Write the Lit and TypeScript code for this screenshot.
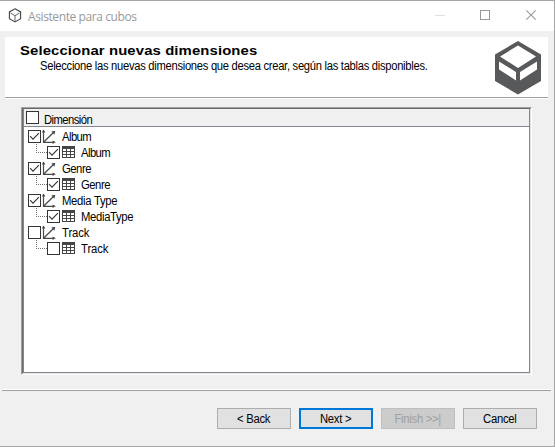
import { LitElement, html, css, svg } from "lit";
import { customElement, property } from "lit/decorators.js";
import { classMap } from "lit/directives/class-map.js";
import { styleMap } from "lit/directives/style-map.js";

interface TreeRow {
  label: string;
  checked: boolean;
  child: boolean;
  tracking: number;
}

const ROWS: TreeRow[] = [
  { label: "Album", checked: true, child: false, tracking: -0.6 },
  { label: "Album", checked: true, child: true, tracking: -0.6 },
  { label: "Genre", checked: true, child: false, tracking: -0.5 },
  { label: "Genre", checked: true, child: true, tracking: -0.5 },
  { label: "Media Type", checked: true, child: false, tracking: -0.3 },
  { label: "MediaType", checked: true, child: true, tracking: -0.35 },
  { label: "Track", checked: false, child: false, tracking: -0.1 },
  { label: "Track", checked: false, child: true, tracking: -0.1 },
];

@customElement("check-box")
class CheckBox extends LitElement {
  @property({ type: Boolean }) checked = false;

  static styles = css`
    :host { display: block; width: 13px; height: 13px; flex: none; }
    svg { display: block; }
  `;

  render() {
    return html`<svg width="13" height="13" viewBox="0 0 13 13">
      <rect x=".5" y=".5" width="12" height="12" fill="#fff" stroke="#333" />
      ${this.checked
        ? svg`<path d="M2.1 6.2 5 9.1 10.9 3.2" fill="none" stroke="#333" stroke-width="1.15" />`
        : null}
    </svg>`;
  }
}

@customElement("dimension-tree")
class DimensionTree extends LitElement {
  static styles = css`
    :host {
      display: flex;
      flex-direction: column;
      box-sizing: border-box;
      background: #fff;
      border: 1px solid;
      border-color: #a0a0a0 #fff #fff #a0a0a0;
    }
    .inner {
      flex: 1;
      border: 1px solid;
      border-color: #696969 #e3e3e3 #e3e3e3 #696969;
    }
    .frame {
      height: 100%;
      box-sizing: border-box;
      border: 1px solid #828790;
      border-top: 0;
    }
    .head {
      display: flex;
      height: 18px;
      align-items: flex-start;
      box-sizing: border-box;
      padding: 2px 0 0 2px;
      background: #f0f0f0;
      border-bottom: 1px solid #828790;
    }
    .head .text { line-height: 18px; letter-spacing: -0.6px; }
    .rows { padding-top: 1px; }
    .row { display: flex; height: 16px; padding-left: 4px; }
    .row check-box { margin-top: 2px; }
    .icon { display: block; flex: none; margin-left: 1px; }
    .text {
      display: block;
      white-space: pre;
      line-height: 19px;
      margin-left: 5px;
      transform: scaleX(0.94);
      transform-origin: left;
    }
    .elbow {
      width: 16px;
      height: 11px;
      margin-left: 3px;
      flex: none;
    }
  `;

  private axes() {
    return html`<svg class="icon" width="15" height="16" viewBox="0 0 15 16">
      <g fill="none" stroke="#4a4a4c" stroke-width="1.2">
        <path d="M1.5 3V14.3H12M1.5 14.3 12 4" />
      </g>
      <path d="M-.3 4.5 1.5 1.5 3.4 4.5ZM9.3 3.5 13.2 2.8 12.5 6.7ZM10.6 12.5 13.8 14.3 10.6 16Z" fill="#4a4a4c" />
    </svg>`;
  }

  private table() {
    return html`<svg class="icon" width="15" height="16" viewBox="0 0 15 16">
      <rect x="1" y="2" width="13" height="12" fill="#454547" />
      <path
        d="M2 5h3v2h-3zM6 5h3v2h-3zM10 5h3v2h-3zM2 8h3v2h-3zM6 8h3v2h-3zM10 8h3v2h-3zM2 11h3v2h-3zM6 11h3v2h-3zM10 11h3v2h-3z"
        fill="#fff"
      />
    </svg>`;
  }

  render() {
    return html`<div class="inner"><div class="frame">
      <div class="head"><check-box></check-box><span class="text">Dimensión</span></div>
      <div class="rows">
        ${ROWS.map(
          (r) => html`<div class=${classMap({ row: true, child: r.child })}>
            ${r.child
              ? html`<svg class="elbow" width="16" height="11" viewBox="0 0 16 11">
                  <path d="M5.5 0V9M5 8.5H16" fill="none" stroke="#707070" stroke-dasharray="1 1" />
                </svg>`
              : null}
            <check-box ?checked=${r.checked}></check-box>
            ${r.child ? this.table() : this.axes()}
            <span class="text" style=${styleMap({ letterSpacing: `${r.tracking}px` })}>${r.label}</span>
          </div>`
        )}
      </div>
    </div></div>`;
  }
}

@customElement("app-root")
class AppRoot extends LitElement {
  static styles = css`
    :host {
      display: flex;
      flex-direction: column;
      width: 555px;
      height: 447px;
      box-sizing: border-box;
      border: solid #a5a5a5;
      border-width: 1px 1px 1px 0;
      background: #f0f0f0;
      color: #000;
      font: 12px "Liberation Sans", Arial, sans-serif;
      overflow: hidden;
    }
    .titlebar {
      display: flex;
      height: 30px;
      flex: none;
      background: #fff;
    }
    .cube { margin: 7px 0 0 8px; flex: none; }
    .caption {
      flex: 1;
      margin-left: 6px;
      line-height: 31px;
      color: #999;
      font-family: "Open Sans", "Noto Sans", sans-serif;
      font-size: 12px;
      letter-spacing: -0.4px;
    }
    .controls { flex: none; }
    .banner {
      display: flex;
      flex: none;
      height: 60px;
      margin: 6px 6px 0 5px;
      background: #fff;
      border-bottom: 1px solid #a0a0a0;
      box-shadow: 0 1px #fff;
    }
    .words { flex: 1; padding: 6px 0 0 15px; }
    .title {
      font-size: 13.5px;
      font-weight: bold;
      line-height: 16px;
      white-space: pre;
      letter-spacing: 0.1px;
      transform: scaleX(1.102);
      transform-origin: left;
    }
    .sub {
      margin-left: 20px;
      line-height: 14px;
      white-space: pre;
      letter-spacing: -0.3px;
      transform: scaleX(0.9325);
      transform-origin: left;
    }
    .logo { flex: none; margin: 3px 6px 0 0; }
    dimension-tree { flex: none; height: 268px; margin: 9px 22px 0 21px; }
    .rule {
      flex: none;
      height: 1px;
      margin: 14px 3px 0 2px;
      border-top: 1px solid #fff;
      background: #a0a0a0;
    }
    .buttons { display: flex; gap: 8px; justify-content: flex-end; padding: 17px 17px 0 0; }
    .button {
      width: 74px;
      height: 21px;
      box-sizing: border-box;
      border: 1px solid #adadad;
      background: #e1e1e1;
      text-align: center;
      line-height: 21px;
      letter-spacing: -0.3px;
      white-space: pre;
    }
    .button span { display: inline-block; margin-right: 1px; transform: scaleX(0.94); }
    .primary { border: 2px solid #0078d7; line-height: 19px; }
    .disabled { border-color: #bfbfbf; background: #ccc; color: #a0a0a0; }
  `;

  render() {
    return html`
      <div class="titlebar">
        <svg class="cube" width="14" height="15" viewBox="0 0 14 15" fill="none" stroke="#444">
          <path d="M7 .8 12.6 3.9V10.6L7 13.9 1.4 10.6V3.9Z" stroke-width="1.1" />
          <path d="M2.5 5 7 7.7 11.5 5M7 7.7V13" stroke-width="1" stroke="#666" />
        </svg>
        <span class="caption">Asistente para cubos</span>
        <svg class="controls" width="130" height="30" viewBox="0 0 130 30" fill="none">
          <path d="M11 14.5H21" stroke="#e0e0e0" />
          <rect x="56.5" y="9.5" width="9" height="9" stroke="#999" />
          <path d="M102.3 9.3 111.7 18.7M111.7 9.3 102.3 18.7" stroke="#999" stroke-width="1.1" />
        </svg>
      </div>
      <div class="banner">
        <div class="words">
          <div class="title">Seleccionar nuevas dimensiones</div>
          <div class="sub">Seleccione las nuevas dimensiones que desea crear, según las tablas disponibles.</div>
        </div>
        <svg class="logo" width="48" height="56" viewBox="0 0 48 56">
          <path
            fill-rule="evenodd"
            fill="#58595b"
            d="M24 1 47 14.5V41L24 54.5 1 41V14.5ZM24 5.5 6 16.5 24 28 42 16.5ZM5 21.5V29.5L22 40.5V32ZM43 21.5V29.5L26 40.5V32Z"
          />
        </svg>
      </div>
      <dimension-tree></dimension-tree>
      <div class="rule"></div>
      <div class="buttons">
        <div class="button"><span>&lt; Back</span></div>
        <div class="button primary"><span>Next &gt;</span></div>
        <div class="button disabled"><span>Finish &gt;&gt;|</span></div>
        <div class="button"><span>Cancel</span></div>
      </div>
    `;
  }
}
